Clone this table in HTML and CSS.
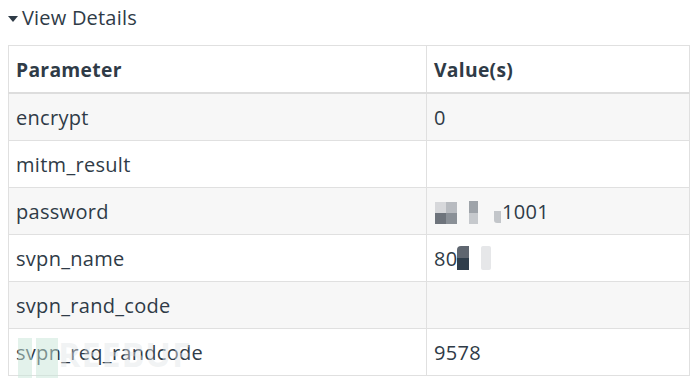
FILE: index.html
```html
<!DOCTYPE html>
<html>
<head>
<meta charset="utf-8">
<link rel="stylesheet" href="styles.css">
</head>
<body>
<div class="page">
  <div class="summary"><span class="caret"></span><span class="summary-text">View Details</span></div>
  <table class="params">
    <thead>
      <tr><th class="c1">Parameter</th><th class="c2">Value(s)</th></tr>
    </thead>
    <tbody>
      <tr class="odd"><td>encrypt</td><td>0</td></tr>
      <tr><td>mitm_result</td><td></td></tr>
      <tr class="odd"><td>password</td><td><span class="redact r-pw"><span class="px p1"></span><span class="px p2"></span><span class="px p3"></span><span class="px p4"></span><span class="px p5"></span><span class="px p6"></span><span class="px p7"></span></span>1001</td></tr>
      <tr><td>svpn_name</td><td>80<span class="redact r-nm"><span class="px n1"></span><span class="px n2"></span><span class="px n3"></span></span></td></tr>
      <tr class="odd"><td>svpn_rand_code</td><td></td></tr>
      <tr><td>svpn_req_randcode</td><td>9578</td></tr>
    </tbody>
  </table>
  <div class="watermark"><span class="wm-block b1"></span><span class="wm-block b2"></span><span class="wm-text">REEBUF</span></div>
</div>
</body>
</html>
```

FILE: styles.css
```css
html, body {
  margin: 0;
  padding: 0;
  background: #ffffff;
}
body {
  font-family: "Open Sans", Lato, sans-serif;
  color: #2f3b47;
  overflow: hidden;
}
.page {
  position: relative;
  padding: 0 0 0 8px;
  width: 682px;
  height: 380px;
}
.summary {
  display: flex;
  align-items: center;
  height: 36px;
  font-size: 20px;
}
.caret {
  width: 0;
  height: 0;
  border-left: 5px solid transparent;
  border-right: 5px solid transparent;
  border-top: 6px solid #2f3b47;
  margin-right: 4px;
  margin-top: 1px;
}
.summary-text {
  line-height: 20px;
  letter-spacing: 0.2px;
}
.params {
  margin-top: 9px;
  border-collapse: collapse;
  width: 682px;
  font-size: 19.3px;
  table-layout: fixed;
}
.params th, .params td {
  border: 1px solid #e0e0e0;
  text-align: left;
  padding: 0 7px;
  height: 46px;
  vertical-align: middle;
}
.params td {
  font-size: 20px;
  letter-spacing: 0.3px;
}
.params th {
  font-weight: 700;
  height: 46px;
  border-bottom: 2px solid #dddddd;
  letter-spacing: 0.3px;
}
.params .c1 { width: 403px; }
.params tr.odd td { background: #f7f7f7; }
.redact {
  display: inline-block;
  position: relative;
  vertical-align: -4px;
}
.px { display: block; position: absolute; }
.r-pw { width: 68px; height: 22px; }
.r-pw .p1 { left: 1px; top: 1px; width: 11px; height: 11px; background: #d7d8db; }
.r-pw .p2 { left: 12px; top: 1px; width: 11px; height: 11px; background: #b8bbc0; }
.r-pw .p3 { left: 1px; top: 12px; width: 11px; height: 11px; background: #6e747c; }
.r-pw .p4 { left: 12px; top: 12px; width: 11px; height: 11px; background: #8a9097; }
.r-pw .p5 { left: 35px; top: 0; width: 9px; height: 12px; background: #9ea3a9; }
.r-pw .p6 { left: 35px; top: 12px; width: 9px; height: 11px; background: #c6c9cd; }
.r-pw .p7 { left: 60px; top: 10px; width: 7px; height: 12px; background: #c3c6ca; border-bottom-left-radius: 3px; }
.r-nm { width: 38px; height: 24px; }
.r-nm .n1 { left: 0; top: 0; width: 12px; height: 12px; background: #5f6670; border-top-left-radius: 4px; }
.r-nm .n2 { left: 0; top: 12px; width: 12px; height: 12px; background: #2f3d4b; }
.r-nm .n3 { left: 24px; top: 0; width: 10px; height: 24px; background: #e6e7e9; border-radius: 2px; }
.watermark {
  position: absolute;
  left: 18px;
  top: 338px;
  display: flex;
  align-items: flex-start;
  pointer-events: none;
}
.wm-block { display: inline-block; background: rgba(200, 230, 215, 0.5); }
.b1 { width: 14px; height: 40px; margin-right: 4px; }
.b2 { width: 22px; height: 40px; }
.wm-text {
  font-family: "Open Sans", sans-serif;
  font-weight: 700;
  font-size: 34px;
  color: rgba(225, 228, 230, 0.45);
  line-height: 32px;
  height: 36px;
  letter-spacing: 1px;
}
```
